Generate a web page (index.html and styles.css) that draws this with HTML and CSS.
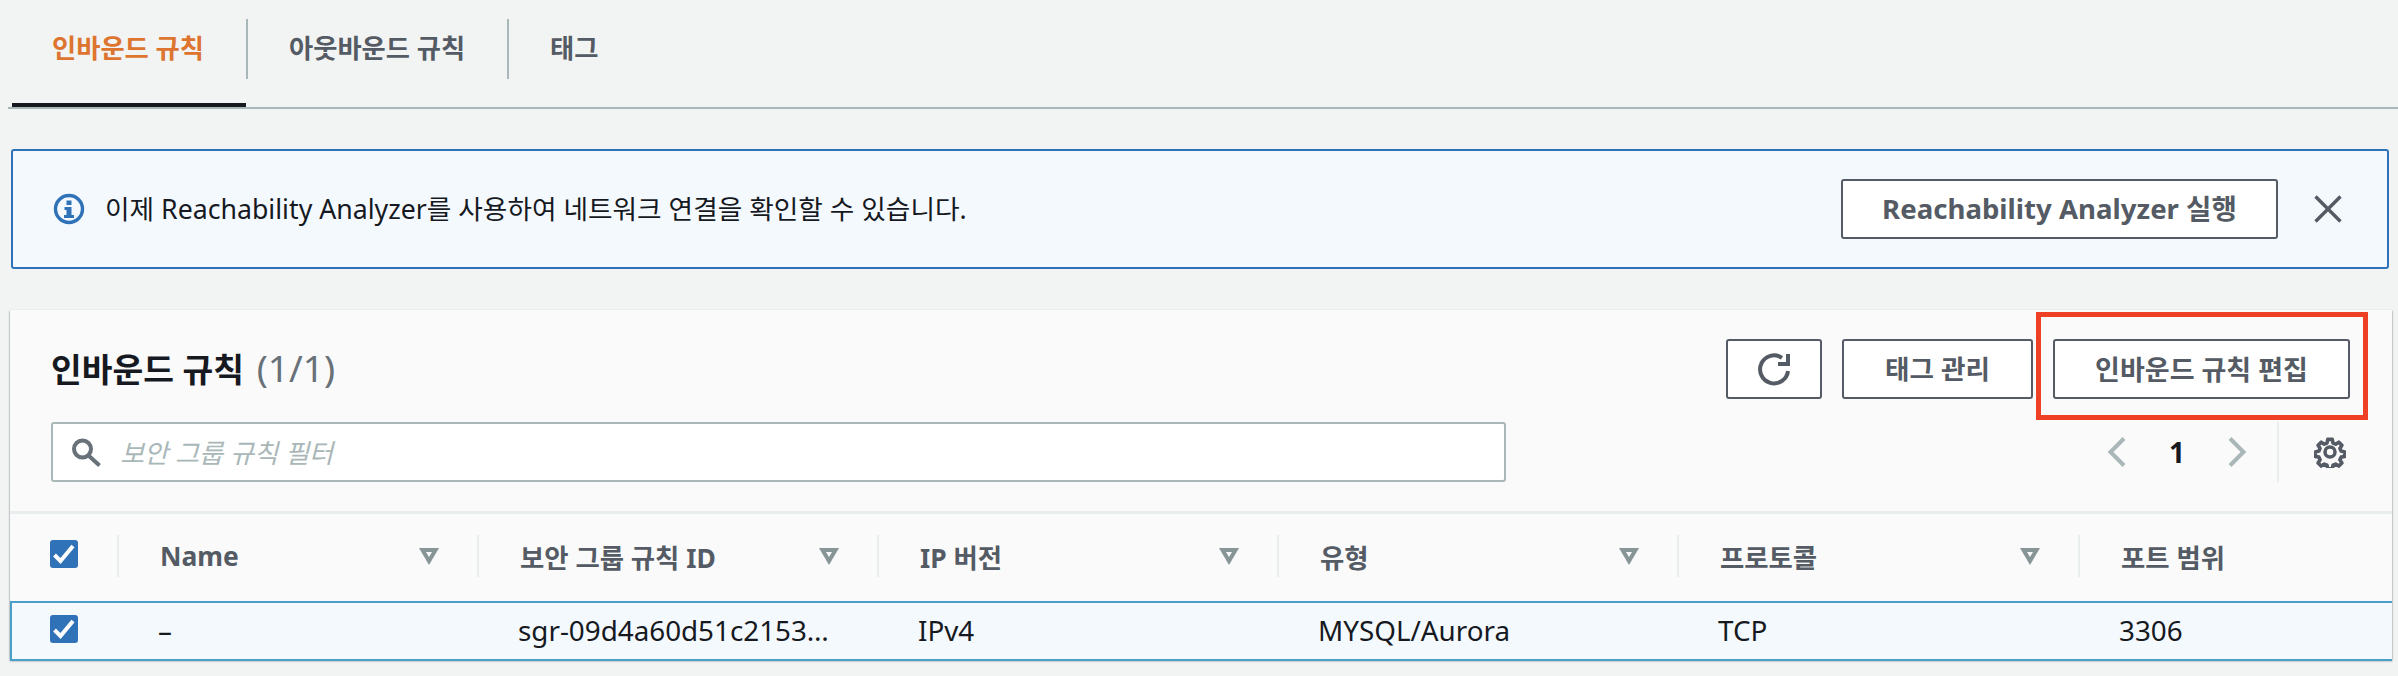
FILE: index.html
```html
<!DOCTYPE html>
<html lang="ko">
<head>
<meta charset="utf-8">
<title>인바운드 규칙</title>
<link rel="stylesheet" href="styles.css">
</head>
<body>
<nav class="tabs">
  <a class="tab tab-active">인바운드 규칙</a>
  <span class="tab-divider"></span>
  <a class="tab tab-second">아웃바운드 규칙</a>
  <span class="tab-divider"></span>
  <a class="tab tab-third">태그</a>
</nav>

<section class="alert">
  <svg class="alert-icon" width="32" height="32" viewBox="0 0 32 32"><circle cx="16" cy="16" r="13.5" fill="none" stroke="#2f72b8" stroke-width="3.4"/><rect x="13.5" y="7.5" width="5" height="4.5" fill="#2f72b8"/><path d="M11.5 14h7v8h2.500v3h-10v-3h2.500v-5h-2z" fill="#2f72b8"/></svg>
  <p class="alert-text">이제 Reachability Analyzer를 사용하여 네트워크 연결을 확인할 수 있습니다.</p>
  <button class="btn btn-analyzer">Reachability Analyzer 실행</button>
  <svg class="alert-close" width="28" height="28" viewBox="0 0 28 28"><path d="M1.500 1.500l25 25M26.500 1.500l-25 25" fill="none" stroke="#545b64" stroke-width="3.400"/></svg>
</section>

<section class="card">
  <header class="card-head">
    <div class="head-top">
      <h2 class="title">인바운드 규칙 <span class="count">(1/1)</span></h2>
      <div class="actions">
        <button class="btn btn-icon"><svg width="32" height="34" viewBox="0 0 32 34"><path d="M24 5.800A14 14 0 1 0 30 19" fill="none" stroke="#545b64" stroke-width="4"/><path d="M20 12h10V2" fill="none" stroke="#545b64" stroke-width="4"/></svg></button>
        <button class="btn btn-tags">태그 관리</button>
        <span class="highlight"><button class="btn btn-edit">인바운드 규칙 편집</button></span>
      </div>
    </div>
    <div class="head-bottom">
      <label class="search">
        <svg width="30" height="30" viewBox="0 0 30 30"><circle cx="10.500" cy="12" r="8.500" fill="none" stroke="#687078" stroke-width="4"/><path d="M16.500 18.500l11 10" stroke="#687078" stroke-width="4"/></svg>
        <span class="placeholder">보안 그룹 규칙 필터</span>
      </label>
      <div class="pager">
        <svg width="20" height="32" viewBox="0 0 20 32"><path d="M17 2.500L3.500 16 17 29.500" fill="none" stroke="#aab7b8" stroke-width="4"/></svg>
        <span class="page-num">1</span>
        <svg width="20" height="32" viewBox="0 0 20 32"><path d="M3 2.500L16.500 16 3 29.500" fill="none" stroke="#aab7b8" stroke-width="4"/></svg>
        <span class="pager-divider"></span>
        <svg class="gear" width="32" height="32" viewBox="0 0 32 32"><circle cx="16" cy="16" r="5" fill="none" stroke="#545b64" stroke-width="3.500"/><path d="M13.500 2h5l.8 4 3 1.300 3.500-2.200 3.400 3.500-2.200 3.400 1.300 3 4 .9v5l-4 .8-1.300 3 2.200 3.500-3.400 3.400-3.500-2.200-3 1.300-.8 4h-5l-.8-4-3-1.300-3.500 2.200-3.400-3.400 2.200-3.500-1.300-3-4-.8v-5l4-.9 1.300-3-2.200-3.400 3.400-3.500 3.500 2.200 3-1.300z" transform="translate(1.600 1.600) scale(.9)" fill="none" stroke="#545b64" stroke-width="4" stroke-linejoin="round"/></svg>
      </div>
    </div>
  </header>

  <div class="table">
    <div class="cell-head cell-check"><span class="check"><svg width="28" height="28" viewBox="0 0 28 28"><path d="M4.500 15l6 6L23 6" fill="none" stroke="#fff" stroke-width="4"/></svg></span></div>
    <div class="cell-head"><span>Name</span><i class="sort"></i></div>
    <div class="cell-head"><span>보안 그룹 규칙 ID</span><i class="sort"></i></div>
    <div class="cell-head"><span>IP 버전</span><i class="sort"></i></div>
    <div class="cell-head"><span>유형</span><i class="sort"></i></div>
    <div class="cell-head"><span>프로토콜</span><i class="sort"></i></div>
    <div class="cell-head cell-last"><span>포트 범위</span></div>

    <div class="row">
      <div class="cell cell-check"><span class="check"><svg width="28" height="28" viewBox="0 0 28 28"><path d="M4.500 15l6 6L23 6" fill="none" stroke="#fff" stroke-width="4"/></svg></span></div>
      <div class="cell">–</div>
      <div class="cell">sgr-09d4a60d51c2153…</div>
      <div class="cell">IPv4</div>
      <div class="cell">MYSQL/Aurora</div>
      <div class="cell">TCP</div>
      <div class="cell">3306</div>
    </div>
  </div>
</section>
</body>
</html>
```
FILE: styles.css
```css
* { box-sizing: border-box; }
html, body { margin: 0; padding: 0; }
body {
  width: 2398px;
  height: 676px;
  overflow: hidden;
  background: #f2f3f3;
  color: #16191f;
  font-family: "Noto Sans", "Noto Sans CJK KR", sans-serif;
  font-size: 26px;
}

.tabs {
  display: flex;
  align-items: flex-start;
  height: 109px;
  margin-left: 8px;
  padding-left: 4px;
  border-bottom: 2px solid #aab7b8;
}
.tab {
  height: 107px;
  padding-top: 26px;
  font-size: 26.300px;
  line-height: 44px;
  font-weight: 700;
  color: #545b64;
  white-space: nowrap;
}
.tab-active {
  width: 234px;
  padding-left: 40px;
  color: #dd7430;
  border-bottom: 4px solid #16191f;
}
.tab-second { width: 259px; padding-left: 41px; }
.tab-third { padding-left: 41px; }
.tab-divider {
  width: 2px;
  height: 60px;
  margin-top: 19px;
  background: #aab7b8;
}

.alert {
  display: flex;
  align-items: center;
  width: 2378px;
  height: 120px;
  margin: 40px 0 0 11px;
  padding: 0 45px 0 40px;
  background: #f4f9fd;
  border: 2px solid #2f72b8;
  border-radius: 3px;
}
.alert-icon { flex: none; margin-right: 20px; }
.alert-text { flex: 1; margin: 0; font-size: 26.700px; line-height: 36px; }
.alert-close { flex: none; margin-left: 36px; }

.btn {
  display: block;
  height: 60px;
  padding: 0;
  background: #fff;
  border: 2px solid #545b64;
  border-radius: 3px;
  color: #545b64;
  font: 700 27px/1 "Noto Sans", "Noto Sans CJK KR", sans-serif;
  white-space: nowrap;
}
.btn-analyzer { width: 437px; font-size: 27.600px; }
.btn-icon { display: flex; align-items: center; justify-content: center; width: 96px; }
.btn-tags { width: 191px; margin-left: 20px; font-size: 26.600px; }
.btn-edit { width: 297px; }

.card {
  width: 2382px;
  height: 350px;
  margin: 41px 0 0 10px;
  background: #fafafa;
  box-shadow: 0 1px 2px rgba(0, 28, 36, .45), 1px 0 1px -1px rgba(0, 28, 36, .3), -1px 0 1px -1px rgba(0, 28, 36, .3);
}
.card-head {
  height: 204px;
  padding: 28px 42px 0 41px;
  border-bottom: 3px solid #eaeded;
}
.head-top { display: flex; justify-content: space-between; align-items: center; height: 60px; }
.title { margin: 0; font-size: 33.400px; line-height: 60px; font-weight: 700; white-space: nowrap; }
.count { margin-left: 4px; font-size: 37px; font-weight: 400; color: #687078; }
.actions { display: flex; align-items: center; margin-top: 2px; }
.highlight {
  display: block;
  margin: -27px -18px -21px 3px;
  padding: 22px 13px 16px 12px;
  border: 5px solid #ed4024;
}

.head-bottom { display: flex; align-items: center; justify-content: space-between; margin-top: 24px; height: 60px; }
.search {
  display: flex;
  align-items: center;
  width: 1455px;
  height: 60px;
  padding-left: 19px;
  background: #fff;
  border: 2px solid #aab7b8;
  border-radius: 3px;
}
.placeholder { margin-left: 18px; font-size: 26.200px; font-style: italic; color: #aab7b8; }
.pager { display: flex; align-items: center; margin-right: 4px; }
.page-num { width: 42px; margin: 0 29px; text-align: center; font-size: 28px; font-weight: 700; color: #16191f; }
.pager-divider { width: 2px; height: 60px; margin: 0 35px 0 30px; background: #eaeded; }
.gear { display: block; }

.table {
  display: grid;
  grid-template-columns: 109px 360px 400px 400px 400px 401px 312px;
  grid-template-rows: 85px 63px;
}
.cell-head {
  display: flex;
  align-items: center;
  justify-content: space-between;
  height: 42px;
  margin-top: 21px;
  padding: 0 38px 0 41px;
  border-right: 2px solid #eaeded;
  color: #545b64;
  font-size: 26.400px;
  font-weight: 700;
  white-space: nowrap;
}
.cell-check { padding: 0 0 0 40px; justify-content: flex-start; }
.cell-last { border-right: 0; }
.sort {
  width: 0;
  height: 0;
  border-left: 10px solid transparent;
  border-right: 10px solid transparent;
  border-top: 17px solid #879596;
  position: relative;
}
.sort::after {
  content: "";
  position: absolute;
  left: -3px;
  top: -13px;
  border-left: 3px solid transparent;
  border-right: 3px solid transparent;
  border-top: 5px solid #fafafa;
}
.check {
  display: flex;
  align-items: center;
  justify-content: center;
  width: 28px;
  height: 28px;
  margin-bottom: 4px;
  background: #2f72b8;
  border-radius: 3px;
}

.row {
  grid-column: 1 / -1;
  display: grid;
  grid-template-columns: 107px 360px 400px 400px 400px 401px 312px;
  height: 60px;
  margin-top: 2px;
  background: #f4f9fd;
  border: 2px solid #4a9fc9;
  border-width: 2px 0 2px 2px;
  align-items: center;
}
.cell { padding: 0 0 2px 39px; font-size: 27.800px; line-height: 36px; white-space: nowrap; }
.cell.cell-check { padding: 0 0 0 38px; }
```
